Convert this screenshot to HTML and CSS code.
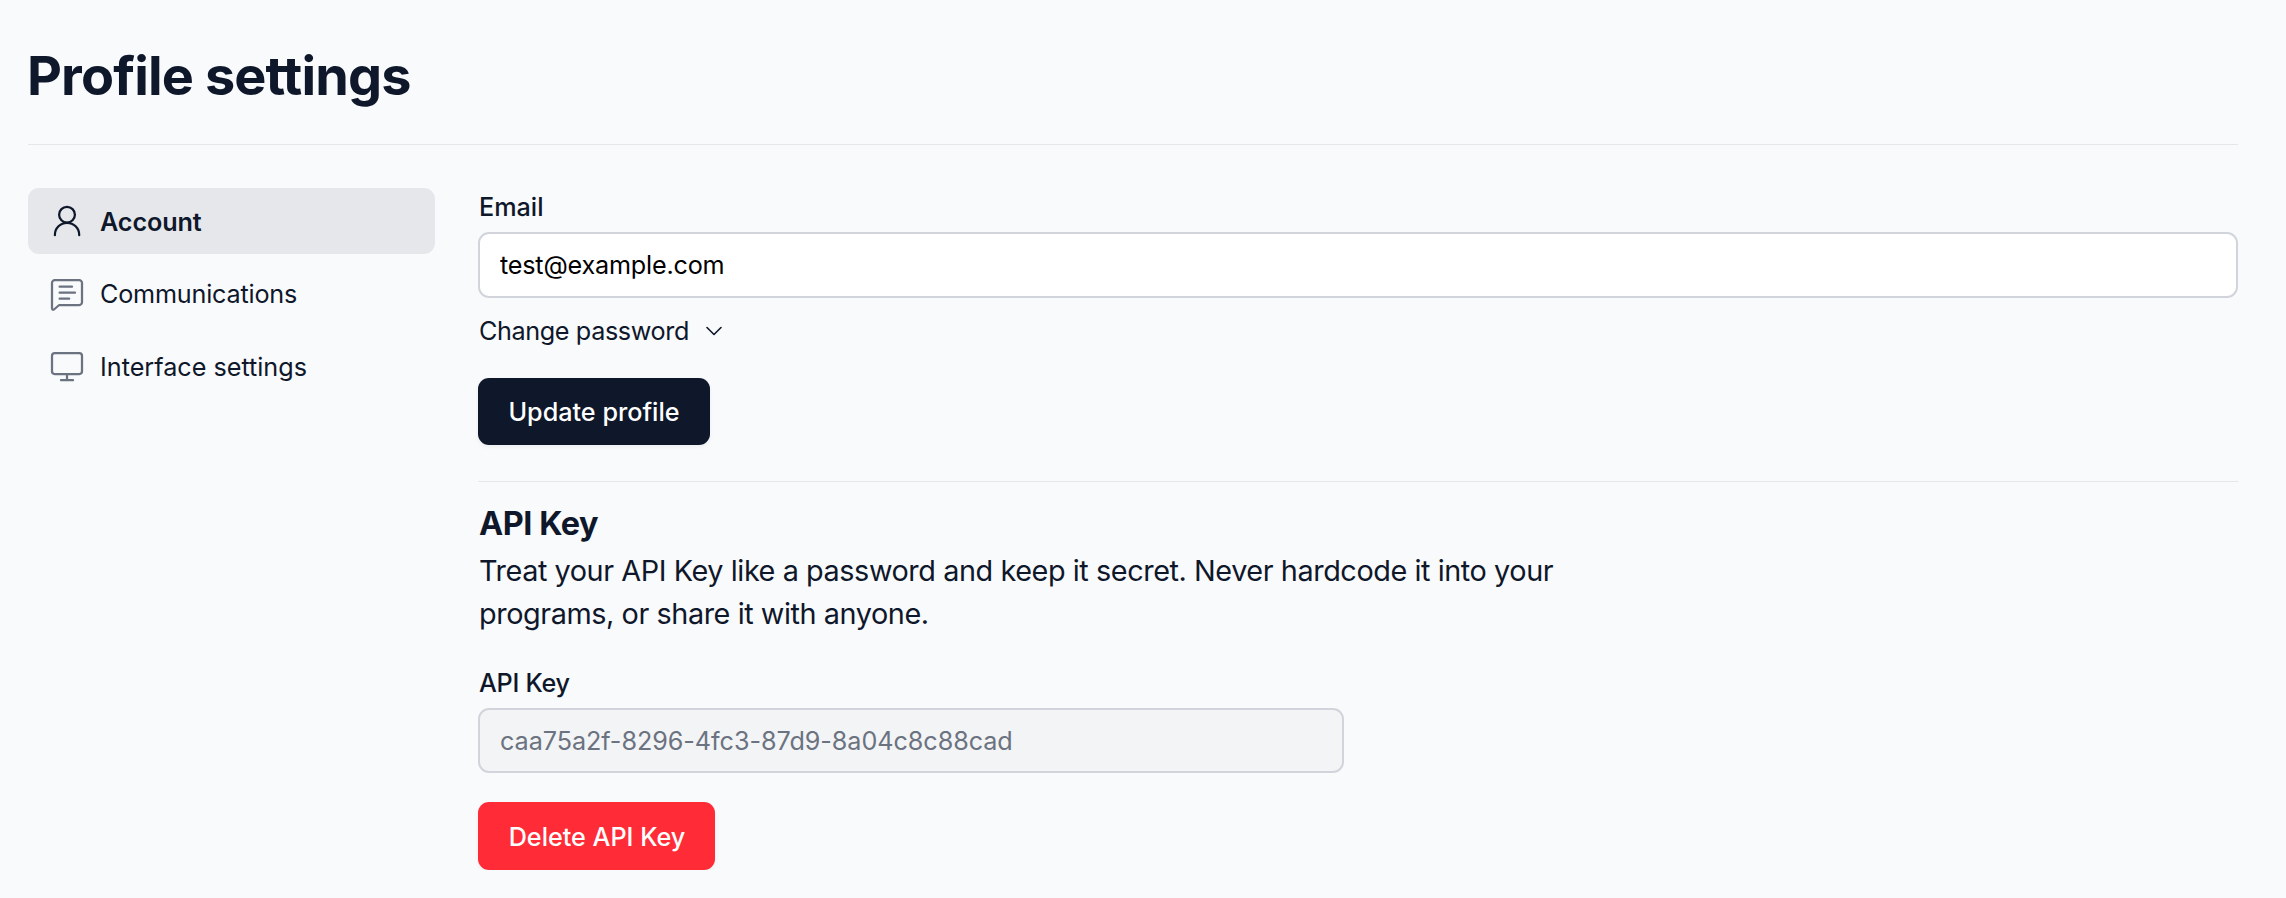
FILE: index.html
```html
<!DOCTYPE html>
<html lang="en">
<head>
    <meta charset="UTF-8">
    <meta name="viewport" content="width=device-width, initial-scale=1">
    <title>Profile settings</title>
    <link rel="stylesheet" href="styles.css">
</head>
<body>
    <div class="container">
        <header class="header">
            <h1>Profile settings</h1>
        </header>

        <div class="content">
            <nav class="sidebar">
                <a class="nav-item active" href="#">
                    <svg class="icon" viewBox="0 0 36 36">
                        <circle cx="18" cy="11.7" r="7.9"/>
                        <path d="M5.9 32.2v-.3a12.15 12.15 0 0 1 24.3 0v.3"/>
                    </svg>
                    <span>Account</span>
                </a>
                <a class="nav-item" href="#">
                    <svg class="icon" viewBox="0 0 36 36">
                        <path d="M5.8 4.2H30.2A2.7 2.7 0 0 1 33 6.9V26.3A2.7 2.7 0 0 1 30.2 29H10.2L5 33.5Q3 34.2 3 32.2V6.9A2.7 2.7 0 0 1 5.8 4.2Z"/>
                        <path d="M10.6 10.7H23M10.6 16.7H26M10.6 22.7H20.2"/>
                    </svg>
                    <span class="tight">Communications</span>
                </a>
                <a class="nav-item" href="#">
                    <svg class="icon" viewBox="0 0 36 36">
                        <rect x="3" y="4" width="30" height="21" rx="2.7"/>
                        <path d="M18 25V31M12 31.2H24"/>
                    </svg>
                    <span>Interface settings</span>
                </a>
            </nav>

            <main class="main">
                <form class="profile-form">
                    <label for="email">Email</label>
                    <input id="email" class="input" type="text" value="test@example.com">
                    <div class="change-password">
                        <span>Change password</span>
                        <svg class="chevron" viewBox="0 0 16 10">
                            <path d="M1 1.5L8 8.5L15 1.5"/>
                        </svg>
                    </div>
                    <button type="button" class="button">Update profile</button>
                </form>

                <section class="api-section">
                    <h2>API Key</h2>
                    <p>Treat your API Key like a password and keep it secret. Never hardcode it into your programs, or share it with anyone.</p>
                    <label for="apiKey" class="key-label">API Key</label>
                    <input id="apiKey" class="input key-input" type="text" value="caa75a2f-8296-4fc3-87d9-8a04c8c88cad" disabled>
                    <button type="button" class="button danger">Delete API Key</button>
                </section>
            </main>
        </div>
    </div>
</body>
</html>
```
FILE: styles.css
```css
* {
    box-sizing: border-box;
}
body {
    margin: 0;
    background: #f9fafc;
    color: #0f172a;
    font-family: Inter, sans-serif;
    font-size: 25.2px;
    line-height: 36px;
}
.container {
    padding: 46px 48px 0 28px;
}
.header {
    height: 99px;
    border-bottom: 1px solid #e5e7eb;
}
h1 {
    margin: 0 0 0 -1px;
    font-size: 54px;
    line-height: 60px;
    font-weight: 700;
    letter-spacing: -0.88px;
}
.content {
    display: flex;
    gap: 43px;
    padding-top: 43px;
}
.sidebar {
    display: flex;
    flex-direction: column;
    gap: 7px;
    width: 407px;
    flex-shrink: 0;
}
.nav-item {
    display: flex;
    align-items: center;
    gap: 15px;
    height: 66px;
    padding: 0 21px;
    border-radius: 11px;
    color: #0f172a;
    text-decoration: none;
}
.nav-item.active {
    background: #e5e7eb;
    font-weight: 600;
    letter-spacing: -0.1px;
}
.nav-item.active span {
    padding-top: 2px;
}
.tight {
    letter-spacing: -0.2px;
}
.icon {
    width: 36px;
    height: 36px;
    fill: none;
    stroke: #6b7280;
    stroke-width: 2.25;
    stroke-linecap: round;
    stroke-linejoin: round;
}
.active .icon {
    stroke: #0f172a;
}
.main {
    flex: 1;
}
label {
    display: block;
    padding-left: 1px;
    font-weight: 500;
}
.profile-form {
    height: 294px;
    padding-top: 1px;
    border-bottom: 1px solid #e5e7eb;
}
.input {
    display: block;
    width: 100%;
    height: 66px;
    margin-top: 7px;
    padding: 0 20px;
    border: 2px solid #d1d5db;
    border-radius: 11px;
    background: #fff;
    color: #000;
    font: inherit;
    letter-spacing: -0.2px;
}
.change-password {
    display: flex;
    align-items: center;
    gap: 17px;
    margin: 15px 0 29px;
    padding-left: 1px;
    letter-spacing: -0.38px;
}
.chevron {
    width: 16px;
    height: 10px;
    fill: none;
    stroke: #0f172a;
    stroke-width: 1.6;
    stroke-linecap: round;
    stroke-linejoin: round;
}
.button {
    display: block;
    width: 232px;
    height: 67px;
    padding: 0;
    border: none;
    border-radius: 11px;
    background: #0f172a;
    color: #fff;
    font: inherit;
    font-weight: 500;
    box-shadow: 0 2px 4px rgba(0, 0, 0, 0.05);
}
.api-section {
    padding-top: 20px;
}
h2 {
    margin: 0;
    padding-left: 1px;
    font-size: 32.4px;
    line-height: 43px;
    font-weight: 700;
    letter-spacing: -0.44px;
}
p {
    width: 1100px;
    margin: 4px 0 30px;
    padding-left: 1px;
    font-size: 28.8px;
    line-height: 43.2px;
    letter-spacing: -0.42px;
}
.key-label {
    letter-spacing: -0.3px;
}
.key-input {
    width: 866px;
    height: 65px;
    background: #f3f4f6;
    color: #6b7280;
    letter-spacing: -0.06px;
}
.button.danger {
    width: 237px;
    height: 68px;
    margin-top: 29px;
    padding: 1px 0 0 1px;
    background: #ff2c37;
}
```
